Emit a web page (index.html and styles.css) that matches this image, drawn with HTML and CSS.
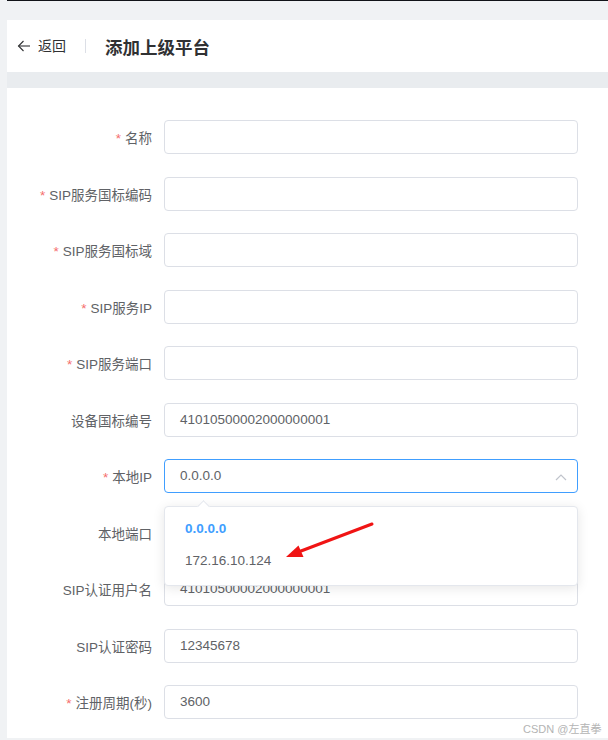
FILE: index.html
```html
<!DOCTYPE html>
<html lang="zh-CN">
<head>
<meta charset="utf-8">
<title>添加上级平台</title>
<link rel="stylesheet" href="styles.css">
</head>
<body>
<div class="topline"></div>
<div class="page">
  <div class="card header">
    <span class="back">
      <svg class="back-icon" width="14" height="14" viewBox="0 0 14 14"><path d="M1.5 7H13" fill="none" stroke="#303133" stroke-width="1.1"/><path d="M6.5 2L1.5 7L6.5 12" fill="none" stroke="#303133" stroke-width="1.1"/></svg>
      <span class="back-text">返回</span>
    </span>
    <span class="divider"></span>
    <span class="title">添加上级平台</span>
  </div>
  <div class="card form">
    <div class="row"><div class="label"><span class="req">*</span>名称</div><div class="control"><div class="input"></div></div></div>
    <div class="row"><div class="label"><span class="req">*</span>SIP服务国标编码</div><div class="control"><div class="input"></div></div></div>
    <div class="row"><div class="label"><span class="req">*</span>SIP服务国标域</div><div class="control"><div class="input"></div></div></div>
    <div class="row"><div class="label"><span class="req">*</span>SIP服务IP</div><div class="control"><div class="input"></div></div></div>
    <div class="row"><div class="label"><span class="req">*</span>SIP服务端口</div><div class="control"><div class="input"></div></div></div>
    <div class="row"><div class="label">设备国标编号</div><div class="control"><div class="input">41010500002000000001</div></div></div>
    <div class="row"><div class="label"><span class="req">*</span>本地IP</div>
      <div class="control">
        <div class="input focused">0.0.0.0
          <svg class="chev" width="12" height="8" viewBox="0 0 12 8"><path d="M1 7L6 2L11 7" fill="none" stroke="#c0c4cc" stroke-width="1.2"/></svg>
        </div>
        <div class="dropdown">
          <div class="pop-arrow"></div>
          <div class="option selected">0.0.0.0</div>
          <div class="option">172.16.10.124</div>
        </div>
      </div>
    </div>
    <div class="row"><div class="label">本地端口</div><div class="control"><div class="input"></div></div></div>
    <div class="row"><div class="label">SIP认证用户名</div><div class="control"><div class="input">41010500002000000001</div></div></div>
    <div class="row"><div class="label">SIP认证密码</div><div class="control"><div class="input">12345678</div></div></div>
    <div class="row last"><div class="label"><span class="req">*</span>注册周期(秒)</div><div class="control"><div class="input">3600</div></div></div>
  </div>
</div>
<svg class="red-arrow" width="100" height="46" viewBox="0 0 100 46">
  <path d="M92 6L21 33" stroke="#f01414" stroke-width="3" stroke-linecap="round" fill="none"/>
  <path d="M6 39L18.5 27.5L23.5 39Z" fill="#f01414"/>
</svg>
<div class="watermark">CSDN @左直拳</div>
</body>
</html>
```
FILE: styles.css
```css
html, body {
  margin: 0;
  padding: 0;
}
body {
  background: #f0f2f4;
  font-family: "Liberation Sans", "Noto Sans CJK SC", sans-serif;
  color: #606266;
  width: 608px;
  height: 740px;
  overflow: hidden;
  position: relative;
}
.topline {
  height: 1px;
  margin-left: 7px;
  background: #111318;
}
.page {
  padding: 19px 0 0 7px;
}
.card {
  background: #fff;
}
.header {
  height: 52px;
  display: flex;
  align-items: center;
  padding-left: 10px;
  border-bottom: 16px solid #e9ecef;
}
.back {
  display: flex;
  align-items: center;
  color: #303133;
  font-size: 14px;
}
.back-icon {
  margin-right: 7px;
}
.back-text {
  line-height: 14px;
}
.divider {
  width: 1px;
  height: 14px;
  background: #dcdfe6;
  margin: 0 19px 0 19px;
}
.title {
  font-size: 17.5px;
  font-weight: 700;
  color: #303133;
}
.form {
  padding-top: 32px;
  padding-bottom: 19px;
}
.row {
  display: flex;
  align-items: center;
  margin-bottom: 22.5px;
}
.row.last {
  margin-bottom: 0;
}
.label {
  width: 157px;
  box-sizing: border-box;
  padding-right: 12px;
  text-align: right;
  font-size: 13.5px;
  color: #606266;
}
.req {
  color: #f56c6c;
  margin-right: 4px;
}
.control {
  width: 414px;
  position: relative;
}
.input {
  height: 34px;
  box-sizing: border-box;
  border: 1px solid #dcdfe6;
  border-radius: 4px;
  padding: 0 15px;
  font-size: 13.5px;
  line-height: 32px;
  color: #606266;
  background: #fff;
  position: relative;
}
.input.focused {
  border-color: #409eff;
}
.chev {
  position: absolute;
  right: 10px;
  top: 13px;
}
.dropdown {
  position: absolute;
  left: 0;
  top: 47px;
  width: 414px;
  box-sizing: border-box;
  background: #fff;
  border: 1px solid #e4e7ed;
  border-radius: 4px;
  box-shadow: 0 2px 12px rgba(0, 0, 0, 0.1);
  padding: 6px 0 8px;
  z-index: 10;
}
.pop-arrow {
  position: absolute;
  left: 34px;
  top: -5px;
  width: 8px;
  height: 8px;
  background: #fff;
  border-left: 1px solid #e4e7ed;
  border-top: 1px solid #e4e7ed;
  transform: rotate(45deg);
}
.option {
  height: 32px;
  line-height: 32px;
  padding: 0 20px;
  font-size: 13.5px;
  color: #606266;
}
.option.selected {
  color: #409eff;
  font-weight: 700;
}
.red-arrow {
  position: absolute;
  left: 280px;
  top: 518px;
  z-index: 20;
}
.watermark {
  position: absolute;
  left: 523px;
  top: 720px;
  font-size: 11px;
  color: #b4b4b4;
  z-index: 20;
}
```
